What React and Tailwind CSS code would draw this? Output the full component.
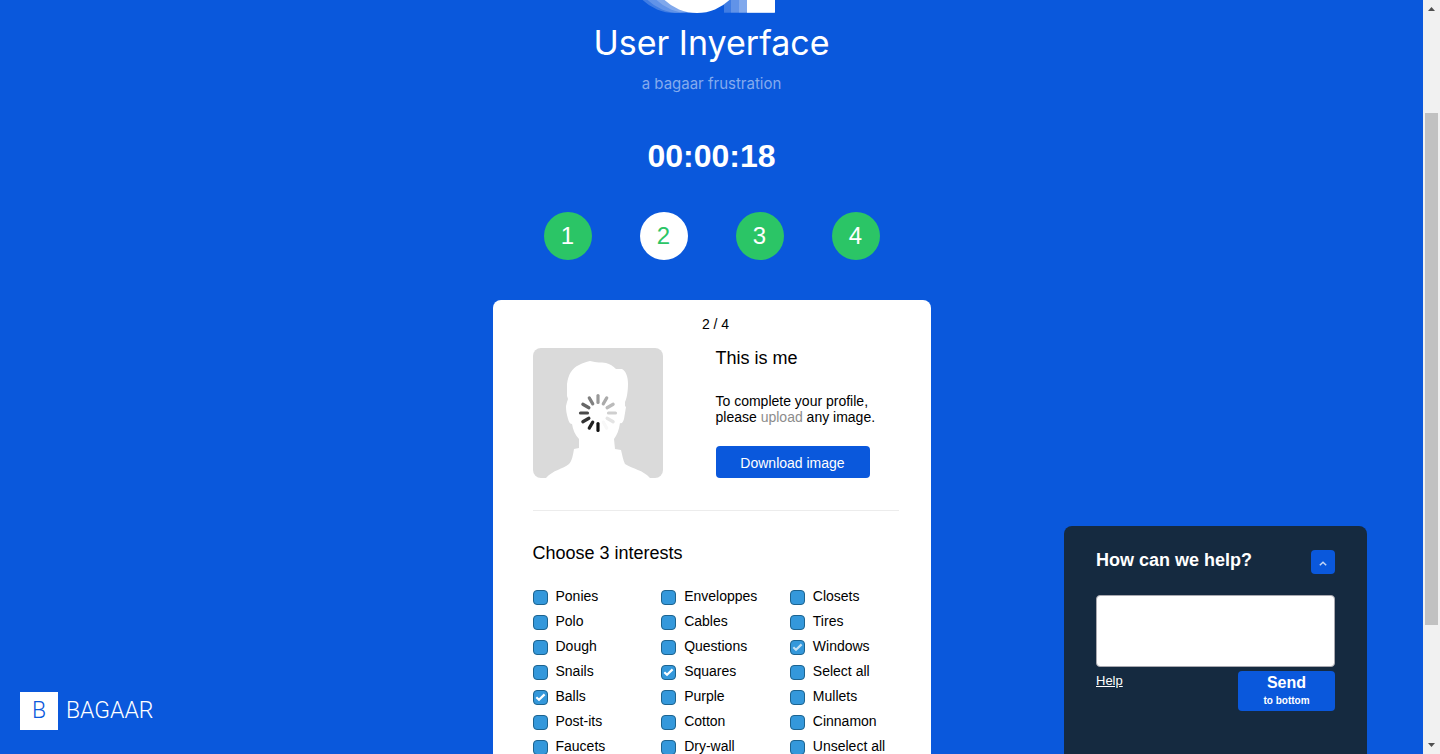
import React from "react";

const STEPS = [1, 2, 3, 4];
const CURRENT_STEP = 2;

const INTERESTS = [
  { name: "Ponies" },
  { name: "Enveloppes" },
  { name: "Closets" },
  { name: "Polo" },
  { name: "Cables" },
  { name: "Tires" },
  { name: "Dough" },
  { name: "Questions" },
  { name: "Windows", checked: true, faded: true },
  { name: "Snails" },
  { name: "Squares", checked: true },
  { name: "Select all" },
  { name: "Balls", checked: true },
  { name: "Purple" },
  { name: "Mullets" },
  { name: "Post-its" },
  { name: "Cotton" },
  { name: "Cinnamon" },
  { name: "Faucets" },
  { name: "Dry-wall" },
  { name: "Unselect all" },
];

// Spoke colours, clockwise from twelve o'clock
const SPOKES = [
  "#999999", "#aaaaaa", "#bbbbbb", "#cfcfcf", "#e4e4e4", "#f8f8f8",
  "#111111", "#222222", "#333333", "#4a4a4a", "#666666", "#808080",
];

function BrandMark() {
  return (
    <svg width="134" height="13" viewBox="0 0 134 13" className="mr-2" aria-hidden="true">
      <g fill="#fff">
        <circle cx="34" cy="-34" r="47" fillOpacity="0.22" />
        <circle cx="39" cy="-34" r="47" fillOpacity="0.18" />
        <circle cx="48" cy="-34" r="47" fillOpacity="0.2" />
        <rect x="83" y="-10" width="50" height="22.7" fillOpacity="0.22" />
        <rect x="90" y="-10" width="43" height="22.7" fillOpacity="0.18" />
        <rect x="98" y="-10" width="35" height="22.7" fillOpacity="0.2" />
        <circle cx="56" cy="-34" r="47" />
        <rect x="106" y="-10" width="28" height="22.7" />
      </g>
    </svg>
  );
}

function Avatar() {
  return (
    <svg width="130" height="130" viewBox="0 0 130 130" className="rounded-lg bg-[#dadada]" role="img" aria-label="Profile image">
      <path
        fill="#fff"
        d="M57 13C53 14 49 15 46 17C39 20 35 27 34 36V48L35 51L34 54L33 58C33 60 33 63 34 67C35 71 36 76 39 76C40 82 42 87 46 91V100L41 101C40 107 39 113 36 116C30 121 20 122 13 130H117C110 122 100 121 92 116C90 112 89 106 88 102L82 101L81 91C84 87 86 82 87 75C89 76 90 74 91 71L93 59L92 58L92 54C94 50 95 42 95 36C95 29 93 23 89 21L83 21C80 18 77 16 73 15C68 14 64 15 57 13Z"
      />
      {SPOKES.map((color, i) => (
        <line
          key={i}
          x1="65"
          y1="54.5"
          x2="65"
          y2="47.5"
          stroke={color}
          strokeWidth="3.2"
          strokeLinecap="round"
          transform={`rotate(${i * 30} 65 65)`}
        />
      ))}
    </svg>
  );
}

function Interest({ name, checked, faded }) {
  return (
    <label className="flex h-[25px] gap-2 text-sm leading-4">
      <span className="relative mt-0.5 size-[15px] shrink-0">
        <input
          type="checkbox"
          defaultChecked={checked}
          className="peer block size-full appearance-none rounded border border-[#1d638f] bg-[#3498db]"
        />
        <svg
          viewBox="0 0 15 15"
          className={
            faded
              ? "pointer-events-none absolute inset-0 opacity-0 peer-checked:opacity-70"
              : "pointer-events-none absolute inset-0 opacity-0 peer-checked:opacity-100"
          }
          aria-hidden="true"
        >
          <path d="M3.3 7.3L6 9.8L11.6 4.4" fill="none" stroke="#fff" strokeWidth="2.2" />
        </svg>
      </span>
      {name}
    </label>
  );
}

function HelpPanel() {
  return (
    <form className="absolute right-14 bottom-0 flex h-[228px] w-[303px] flex-col rounded-t-lg bg-[#152a40] px-8 pt-6 text-white">
      <div className="flex items-start justify-between">
        <h2 className="text-lg leading-5 font-bold">
          <label htmlFor="help-text">How can we help?</label>
        </h2>
        <button type="button" aria-label="Collapse" className="flex size-6 items-center justify-center rounded bg-[#0a58dc]">
          <svg width="8" height="5" viewBox="0 0 8 5" className="mt-0.5" aria-hidden="true">
            <path d="M0.8 4.2L4 1.2L7.2 4.2" fill="none" stroke="#c4d6f6" strokeWidth="1.5" />
          </svg>
        </button>
      </div>
      <textarea id="help-text" className="mt-[21px] h-[72px] w-full resize-none rounded border border-[#a9a9b0] bg-white text-black" />
      <div className="mt-1 flex items-start justify-between">
        <button type="button" className="text-[13px] leading-5 underline">Help</button>
        <button type="button" className="flex h-10 w-[97px] flex-col items-center rounded bg-[#0a58dc] pt-0.5 font-bold">
          <span className="text-base leading-5">Send</span>
          <span className="text-[10px] leading-4">to bottom</span>
        </button>
      </div>
    </form>
  );
}

function ScrollBar() {
  return (
    <div className="flex w-[17px] shrink-0 flex-col items-center justify-between bg-[#f1f1f1]" aria-hidden="true">
      <svg width="17" height="17" viewBox="0 0 17 17"><path d="M5 11H12L8.5 7Z" fill="#505050" /></svg>
      <div className="flex w-full flex-1 flex-col items-center">
        <div className="flex-[96]" />
        <div className="w-[13px] flex-[512] bg-[#c1c1c1]" />
        <div className="flex-[112]" />
      </div>
      <svg width="17" height="17" viewBox="0 0 17 17"><path d="M5 6H12L8.5 10Z" fill="#505050" /></svg>
    </div>
  );
}

export default function App() {
  return (
    <div className="flex h-screen overflow-hidden bg-[#0a58dc] font-['Liberation_Sans',Arial,sans-serif]">
      <div className="relative flex-1 overflow-hidden">
        <header className="flex flex-col items-center text-white">
          <BrandMark />
          <h1 className="mt-2.5 font-[Inter,sans-serif] text-[34px] leading-10 font-normal">User Inyerface</h1>
          <p className="mt-[11px] font-[Inter,sans-serif] text-[15px] leading-5 font-normal text-[#84abee]">a bagaar frustration</p>
          <time className="mt-[42px] text-[32px] leading-10 font-bold">00:00:18</time>
        </header>

        <ol className="mt-9 flex justify-center gap-12">
          {STEPS.map((step) => (
            <li
              key={step}
              className={
                step === CURRENT_STEP
                  ? "flex size-12 items-center justify-center rounded-full bg-white text-2xl text-[#2bc566]"
                  : "flex size-12 items-center justify-center rounded-full bg-[#2bc566] text-2xl text-white"
              }
            >
              {step}
            </li>
          ))}
        </ol>

        <main className="mx-auto mt-10 w-[438px] rounded-lg bg-white pt-4 pr-8 pb-10 pl-10 text-black">
          <p className="text-center text-sm leading-4">2 / 4</p>
          <section className="mt-4 grid grid-cols-2">
            <Avatar />
            <div>
              <h2 className="text-lg leading-5">This is me</h2>
              <p className="mt-[25px] text-sm leading-4">
                To complete your profile,
                <br />
                please <a href="#upload" className="text-[#8c8c8c]">upload</a> any image.
              </p>
              <button type="button" className="mt-[21px] h-8 w-[154px] rounded bg-[#0a58dc] pt-0.5 text-sm text-white">
                Download image
              </button>
            </div>
          </section>
          <hr className="mt-8 border-[#ececec]" />
          <section>
            <h2 className="mt-8 text-lg leading-5">Choose 3 interests</h2>
            <div className="-mr-5 mt-[25px] grid grid-cols-3">
              {INTERESTS.map((interest) => (
                <Interest key={interest.name} {...interest} />
              ))}
            </div>
          </section>
        </main>

        <a href="#bagaar" className="absolute bottom-6 left-5 flex items-center gap-2 font-[Roboto,sans-serif] text-[23px] font-light text-white">
          <span className="flex size-[38px] items-center justify-center bg-white text-[#0a58dc]">B</span>
          <span>BAGAAR</span>
        </a>

        <HelpPanel />
      </div>
      <ScrollBar />
    </div>
  );
}
